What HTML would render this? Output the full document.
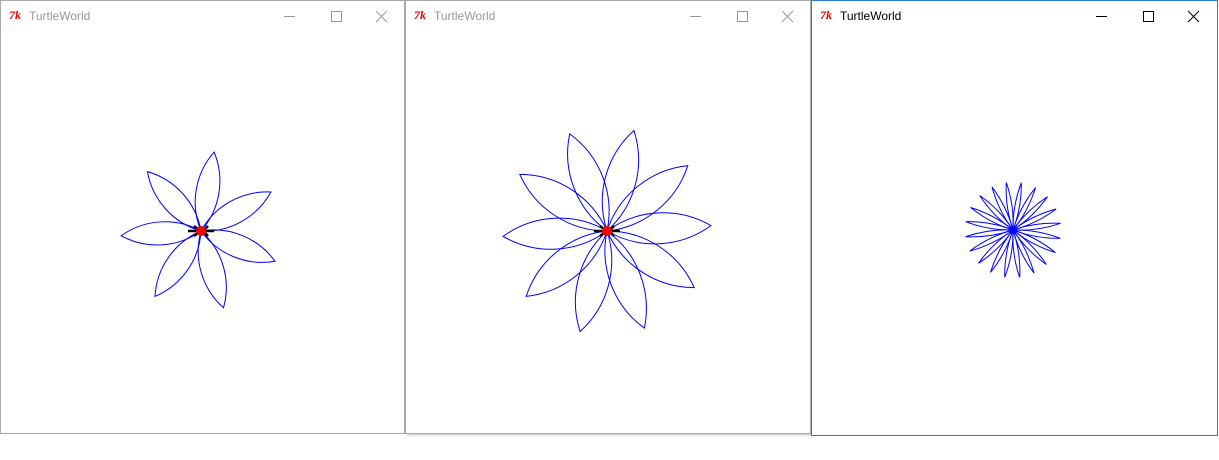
<!DOCTYPE html>
<html><head><style>
body{margin:0;width:1219px;height:460px;background:#fff;position:relative;overflow:hidden;font-family:"Segoe UI","Liberation Sans",sans-serif}
.win{position:absolute;top:0;height:434px;background:#fff;border:1px solid #aaa;box-sizing:border-box}
.tb{height:31px;position:relative;font-size:12px;color:#999}
.tb .t{position:absolute;left:28px;top:8px}
.tk{position:absolute;left:8px;top:7px;color:#e00;font-style:italic;font-weight:bold;font-size:12px;font-family:"Liberation Serif",serif}
.cv{position:absolute;left:2px;right:2px;top:31px;bottom:2px;border-top:1px solid #eee}
</style></head><body>
<div class="win" style="left:0;width:405px"><div class="tb"><span class="tk">7k</span><span class="t">TurtleWorld</span>
<svg style="position:absolute;left:283px;top:9px" width="110" height="14"><line x1="0" y1="6.5" x2="11" y2="6.5" stroke="#999"/><rect x="47.5" y="1.5" width="10" height="10" fill="none" stroke="#999"/><path d="M92 1l11 11M103 1l-11 11" stroke="#999"/></svg></div></div>
<div class="win" style="left:405px;width:406px;box-shadow:2px 0 4px #999"><div class="tb"><span class="tk">7k</span><span class="t">TurtleWorld</span>
<svg style="position:absolute;left:284px;top:9px" width="110" height="14"><line x1="0" y1="6.5" x2="11" y2="6.5" stroke="#999"/><rect x="47.5" y="1.5" width="10" height="10" fill="none" stroke="#999"/><path d="M92 1l11 11M103 1l-11 11" stroke="#999"/></svg></div></div>
<div class="win" style="left:811px;width:407px;height:436px;border-color:#2b7bd0"><div class="tb" style="color:#000"><span class="tk">7k</span><span class="t">TurtleWorld</span>
<svg style="position:absolute;left:284px;top:9px" width="110" height="14"><line x1="0" y1="6.5" x2="11" y2="6.5" stroke="#000"/><rect x="47.5" y="1.5" width="10" height="10" fill="none" stroke="#000"/><path d="M92 1l11 11M103 1l-11 11" stroke="#000"/></svg></div></div>
<svg id="s" style="position:absolute;left:0;top:0" width="1219" height="460"></svg>
<script>
var s=document.getElementById('s'),h='';
function fl(cx,cy,n,L,a0,th){var r=L/(2*Math.sin(th*Math.PI/360));
for(var i=0;i<n;i++){var a=(a0+i*360/n)*Math.PI/180,x=cx+L*Math.cos(a),y=cy+L*Math.sin(a);
h+='<path d="M'+cx+' '+cy+'A'+r+' '+r+' 0 0 1 '+x.toFixed(1)+' '+y.toFixed(1)+'A'+r+' '+r+' 0 0 1 '+cx+' '+cy+'" fill="none" stroke="#00f" stroke-width="1"/>';}}
fl(201,231,7,80,-80.6,64);
fl(607,231,10,104,-75,66);
fl(1013,230,20,48,-80,22);
h+='<path d="M188 231h26M194 226l4 3M194 236l4-3M208 226l-3 3M208 236l-3-3" stroke="#000" stroke-width="2.5"/><circle cx="201" cy="231" r="5" fill="#f00"/>';
h+='<path d="M594 231h26M600 226l4 3M600 236l4-3M614 226l-3 3M614 236l-3-3" stroke="#000" stroke-width="2.5"/><circle cx="607" cy="231" r="5" fill="#f00"/>';
s.innerHTML=h;
</script>
</body></html>
